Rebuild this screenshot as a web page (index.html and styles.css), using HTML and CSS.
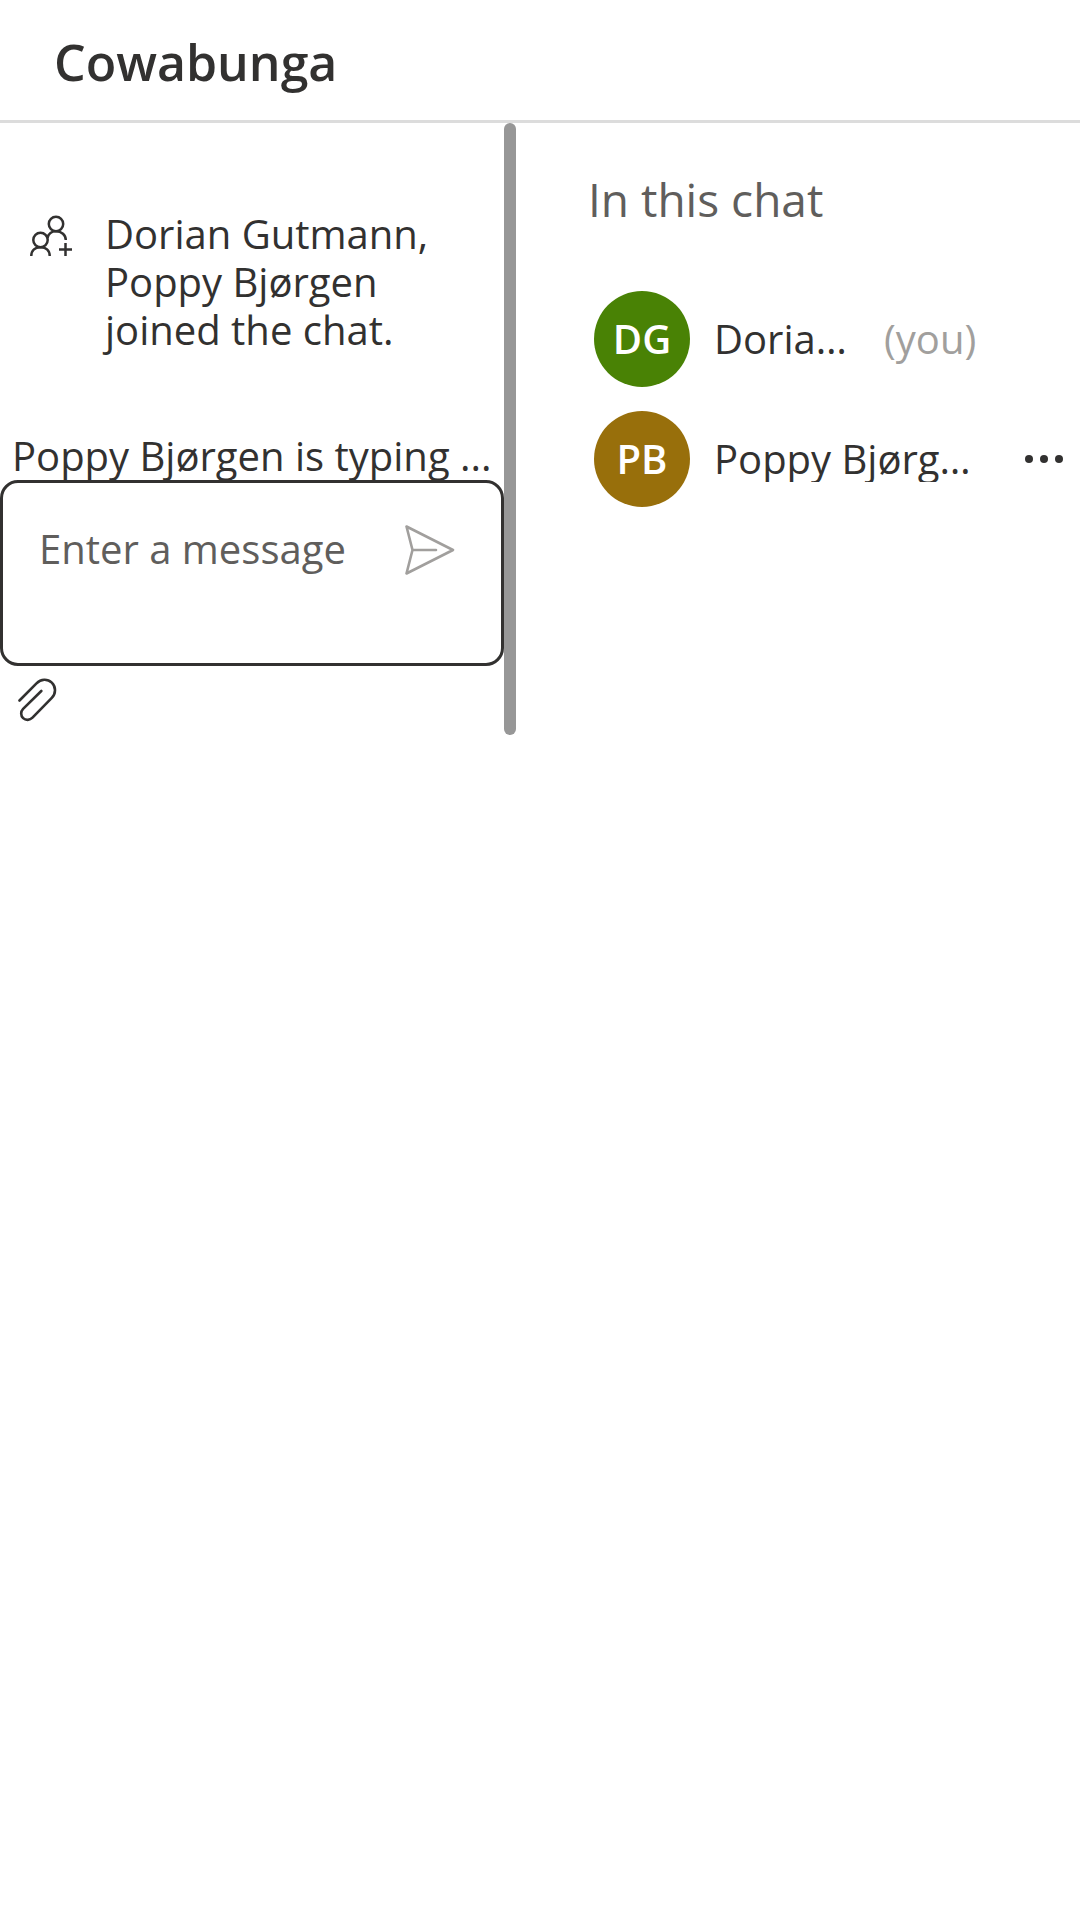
FILE: index.html
```html
<!DOCTYPE html>
<html lang="en">
<head>
<meta charset="utf-8">
<meta name="viewport" content="width=device-width, initial-scale=1">
<title>Cowabunga</title>
<link rel="stylesheet" href="styles.css">
</head>
<body>
<header class="topbar">
  <h1 class="topbar-title">Cowabunga</h1>
</header>
<div class="layout">
  <main class="chat">
    <div class="chat-body">
      <div class="notice">
        <svg class="notice-icon" viewBox="0 0 42 42" fill="none" stroke="currentColor" stroke-width="2.5" aria-hidden="true">
          <circle cx="26" cy="9" r="7.2"/>
          <circle cx="10.500" cy="25" r="7.200"/>
          <path d="M1.300 41c0-6 4-8.800 9.200-8.800s9.200 2.800 9.200 8.800M17.500 23c.8-4.200 4.300-6.800 8.500-6.800 5.500 0 9.800 3.800 9.800 8.800M29 34.500h13M35.500 28v13"/>
        </svg>
        <p class="notice-text">Dorian Gutmann, Poppy Bjørgen joined the chat.</p>
      </div>
      <p class="typing">Poppy Bjørgen is typing ...</p>
      <form class="composer">
        <textarea class="composer-input" rows="2" placeholder="Enter a message" aria-label="Enter a message"></textarea>
        <button class="icon-button composer-send" type="button" aria-label="Send message">
          <svg class="send-icon" viewBox="0 0 50 50" fill="none" stroke="currentColor" stroke-width="2.600" stroke-linejoin="round" stroke-linecap="round" aria-hidden="true">
            <path d="M1.500 1.500 48 25 1.500 48.500 7.500 25zM7.500 25H31"/>
          </svg>
        </button>
      </form>
      <button class="icon-button attach" type="button" aria-label="Attach file">
        <svg class="attach-icon" viewBox="0 0 40 44" fill="none" stroke="currentColor" stroke-width="2.600" stroke-linecap="round" aria-hidden="true">
          <path d="M1.500 22.500 18.500 5.300C23 .7 29.500.5 33.800 4.600s4.200 11 0 15.300L14.500 39.700c-2.700 2.800-6.800 2.900-9.400.4s-2.500-6.700 0-9.300L23.300 13"/>
        </svg>
      </button>
    </div>
    <div class="scroll-thumb"></div>
  </main>
  <aside class="people">
    <h2 class="people-title">In this chat</h2>
    <ul class="people-list">
      <li class="person">
        <span class="avatar avatar-green">DG</span>
        <span class="person-name person-name-self">Dorian Gutmann</span>
        <span class="person-you">(you)</span>
      </li>
      <li class="person">
        <span class="avatar avatar-gold">PB</span>
        <span class="person-name">Poppy Bjørgen</span>
        <button class="icon-button person-more" type="button" aria-label="More options">
          <svg class="more-icon" viewBox="0 0 38 8" fill="currentColor" aria-hidden="true">
            <circle cx="4" cy="4" r="4"/><circle cx="19" cy="4" r="4"/><circle cx="34" cy="4" r="4"/>
          </svg>
        </button>
      </li>
    </ul>
  </aside>
</div>
</body>
</html>
```
FILE: styles.css
```css
* {
  box-sizing: border-box;
}

body {
  margin: 0;
  background: #fff;
  color: #323130;
  font-family: "Open Sans", "Noto Sans", sans-serif;
  font-size: 40px;
  line-height: 48px;
}

h1, h2, p, ul {
  margin: 0;
  padding: 0;
}

.topbar {
  padding: 26px 54px 22px;
  border-bottom: 3px solid #dcdcdc;
}

.topbar-title {
  font-size: 50px;
  font-weight: 600;
  line-height: 72px;
}

.layout {
  display: grid;
  grid-template-columns: minmax(0, 43fr) minmax(0, 47fr);
  align-items: start;
}

.chat {
  display: flex;
  min-width: 0;
}

.chat-body {
  flex: 1;
  min-width: 0;
}

.scroll-thumb {
  flex: none;
  width: 12px;
  border-radius: 6px;
  background: #979797;
}

.notice {
  display: flex;
  gap: 33px;
  padding: 87px 60px 0 30px;
}

.notice-icon {
  flex: none;
  width: 42px;
  height: 42px;
  margin-top: 5px;
}

.notice-text {
  flex: 1;
}

.typing {
  padding: 78px 12px 0;
  height: 126px;
  white-space: nowrap;
}

.composer {
  position: relative;
  display: flex;
  align-items: flex-start;
  height: 186px;
  padding: 42px 36px;
  border: 3px solid #323130;
  border-radius: 18px;
  background: #fff;
}

.composer-input {
  flex: 1;
  min-width: 0;
  height: 96px;
  padding: 0;
  border: 0;
  outline: 0;
  resize: none;
  overflow: hidden;
  background: none;
  color: inherit;
  font: inherit;
}

.composer-input::placeholder {
  color: #605e5c;
  opacity: 1;
}

.icon-button {
  display: flex;
  flex: none;
  padding: 0;
  border: 0;
  background: none;
  color: inherit;
}

.composer-send {
  margin-right: 10px;
  color: #a19f9d;
}

.send-icon {
  width: 50px;
  height: 50px;
}

.attach {
  padding: 12px 18px 13px;
}

.attach-icon {
  width: 40px;
  height: 44px;
}

.people {
  min-width: 0;
  padding: 46px 17px 0 72px;
}

.people-title {
  color: #605e5c;
  font-size: 46px;
  font-weight: 400;
  line-height: 60px;
}

.people-list {
  display: grid;
  grid-template-columns: minmax(0, 1fr);
  gap: 24px;
  padding: 62px 0 0 6px;
  list-style: none;
}

.person {
  display: flex;
  align-items: center;
  min-width: 0;
}

.avatar {
  flex: none;
  width: 96px;
  height: 96px;
  margin-right: 24px;
  border-radius: 50%;
  color: #fff;
  font-weight: 600;
  line-height: 96px;
  text-align: center;
}

.avatar-green {
  background: #498205;
}

.avatar-gold {
  background: #986f0b;
}

.person-name {
  flex: 1;
  min-width: 0;
  overflow: hidden;
  line-height: 46px;
  text-overflow: ellipsis;
  white-space: nowrap;
}

.person-name-self {
  flex: 0 1 140px;
}

.person-you {
  padding-left: 30px;
  color: #a19f9d;
}

.person-more {
  padding: 20px 0 20px 48px;
}

.more-icon {
  width: 38px;
  height: 8px;
}
```
